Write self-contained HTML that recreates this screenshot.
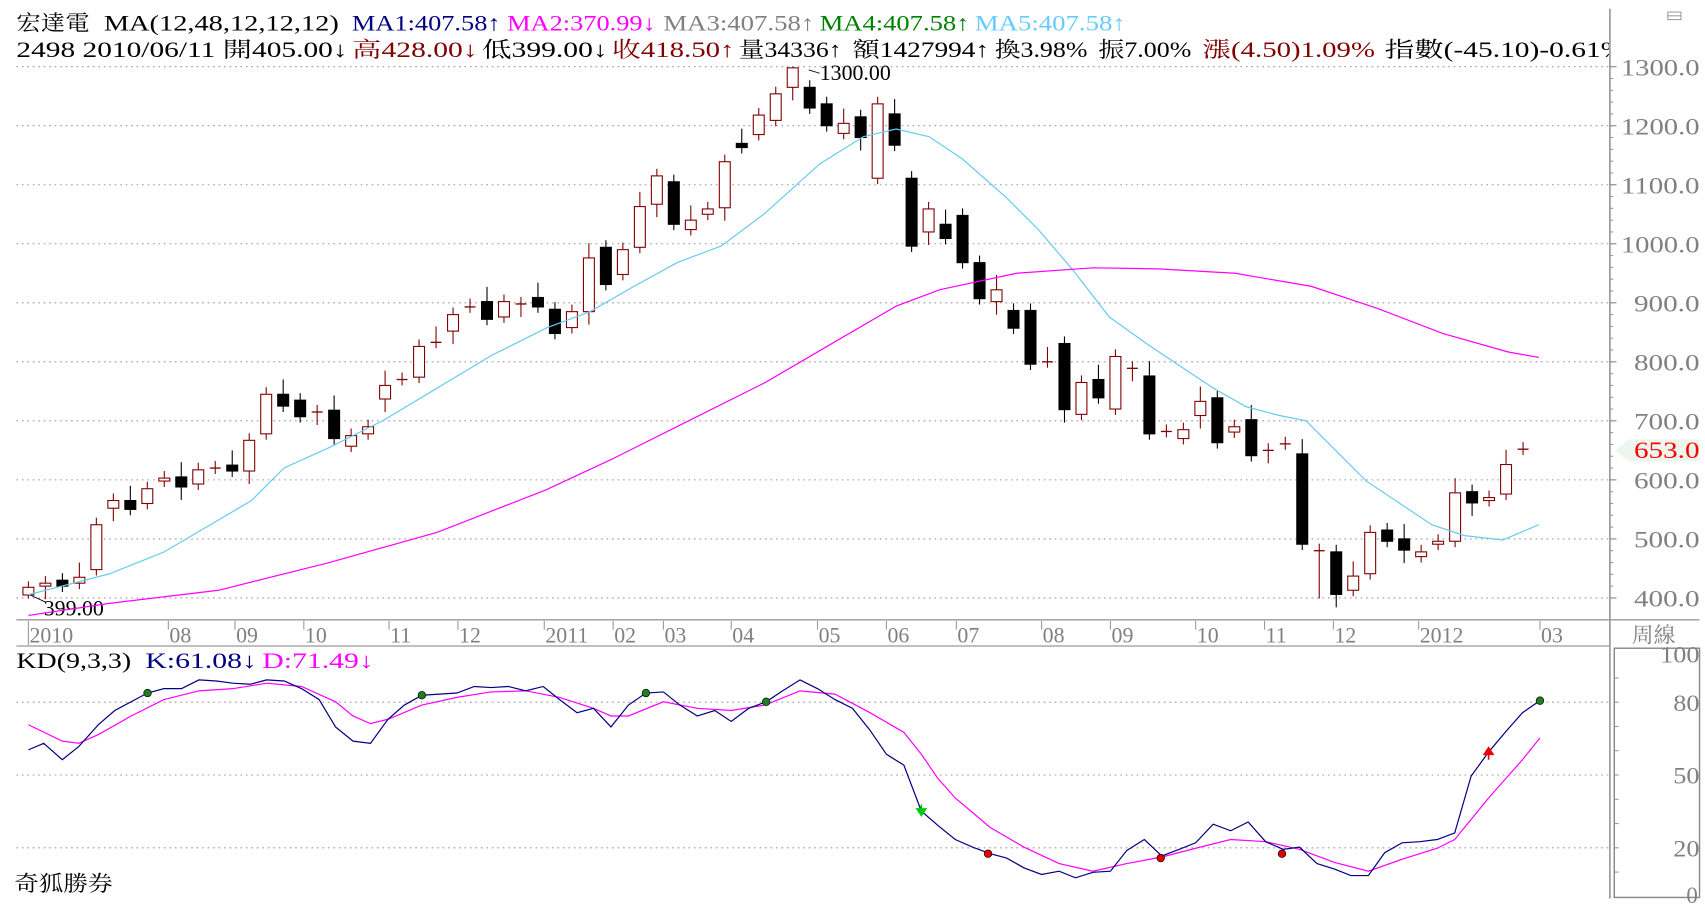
<!DOCTYPE html>
<html><head><meta charset="utf-8"><style>
html,body{margin:0;padding:0;background:#fff;overflow:hidden}
svg{display:block}
text{font-family:"Liberation Serif","Noto Serif CJK SC","Noto Sans CJK TC",serif}
</style></head><body>
<svg id="s" width="1705" height="904" viewBox="0 0 1560 827" preserveAspectRatio="none" xmlns="http://www.w3.org/2000/svg">
<rect width="1560" height="827" fill="#fff"/>
<g id="grid"></g>
<line x1="1473" y1="8" x2="1473" y2="822" stroke="#888" stroke-width="1.3"/>
<line x1="15" y1="567" x2="1555" y2="567" stroke="#999" stroke-width="1.2"/>
<line x1="15" y1="591" x2="1473" y2="591" stroke="#999" stroke-width="1.2"/>
<rect x="1477" y="593" width="78" height="228" fill="none" stroke="#888" stroke-width="1.3"/>
<rect x="1526" y="11" width="12" height="7" fill="none" stroke="#888" stroke-width="0.8"/>
<line x1="1526" y1="14.5" x2="1538" y2="14.5" stroke="#888" stroke-width="0.8"/>
<g font-size="20">
<text x="15" y="28" textLength="67" lengthAdjust="spacingAndGlyphs">宏達電</text>
<text x="95" y="28" textLength="215" lengthAdjust="spacingAndGlyphs">MA(12,48,12,12,12)</text>
<text x="322" y="28" fill="#000080" textLength="136" lengthAdjust="spacingAndGlyphs">MA1:407.58↑</text>
<text x="464" y="28" fill="#ff00ff" textLength="136" lengthAdjust="spacingAndGlyphs">MA2:370.99↓</text>
<text x="607" y="28" fill="#808080" textLength="138" lengthAdjust="spacingAndGlyphs">MA3:407.58↑</text>
<text x="750" y="28" fill="#008000" textLength="137" lengthAdjust="spacingAndGlyphs">MA4:407.58↑</text>
<text x="892" y="28" fill="#66ccff" textLength="138" lengthAdjust="spacingAndGlyphs">MA5:407.58↑</text>
<text x="15" y="52" textLength="303" lengthAdjust="spacingAndGlyphs">2498 2010/06/11 開405.00↓</text>
<text x="322" y="52" fill="#800000" textLength="115" lengthAdjust="spacingAndGlyphs">高428.00↓</text>
<text x="441" y="52" textLength="115" lengthAdjust="spacingAndGlyphs">低399.00↓</text>
<text x="560" y="52" fill="#800000" textLength="112" lengthAdjust="spacingAndGlyphs">收418.50↑</text>
<text x="676" y="52" textLength="94" lengthAdjust="spacingAndGlyphs">量34336↑</text>
<text x="780" y="52" textLength="125" lengthAdjust="spacingAndGlyphs">額1427994↑</text>
<text x="910" y="52" textLength="85" lengthAdjust="spacingAndGlyphs">換3.98%</text>
<text x="1005" y="52" textLength="85" lengthAdjust="spacingAndGlyphs">振7.00%</text>
<text x="1100" y="52" fill="#800000" textLength="158" lengthAdjust="spacingAndGlyphs">漲(4.50)1.09%</text>
<svg x="0" y="0" width="1472" height="60" overflow="hidden"><text x="1267" y="52" textLength="220" lengthAdjust="spacingAndGlyphs">指數(-45.10)-0.61%</text></svg>
<text x="15" y="611" textLength="105" lengthAdjust="spacingAndGlyphs">KD(9,3,3)</text>
<text x="133" y="611" fill="#000080" textLength="102" lengthAdjust="spacingAndGlyphs">K:61.08↓</text>
<text x="240" y="611" fill="#ff00ff" textLength="102" lengthAdjust="spacingAndGlyphs">D:71.49↓</text>
<text x="13" y="815" textLength="90" lengthAdjust="spacingAndGlyphs">奇狐勝券</text>
<text x="1493" y="588" fill="#808080">周線</text>
<text x="40" y="563">399.00</text>
<text x="750" y="73">1300.00</text>
</g>
<line x1="27" y1="544" x2="42" y2="551" stroke="#000" stroke-width="0.8"/>
<line x1="740" y1="64" x2="750" y2="67" stroke="#000" stroke-width="0.8"/>
<polygon points="1478,412 1490,402 1555,402 1555,422 1490,422" fill="#eef5ee"/>
<g id="lab" font-size="21" fill="#808080"></g>
<g id="dates" font-size="20" fill="#808080"></g>
<g id="c"></g>
<polyline fill="none" stroke="#66ccee" stroke-width="1.1" points="26,544 100,525 150,505 230,458 260,428 300,410 350,385 400,355 450,325 500,300 540,285 580,262 620,240 660,225 700,195 750,150 790,125 820,118 850,125 880,145 920,180 950,210 980,245 1015,290 1050,315 1080,335 1110,355 1140,372 1170,380 1195,385 1220,410 1250,440 1280,460 1310,480 1340,490 1375,494 1408,480"/>
<polyline fill="none" stroke="#ff00ff" stroke-width="1.1" points="26,563 100,552 200,540 300,515 400,487 500,448 560,420 620,390 700,350 760,315 820,280 860,265 930,250 1000,245 1060,246 1130,250 1200,262 1260,282 1320,305 1380,322 1408,327"/>
<polyline fill="none" stroke="#ff00ff" stroke-width="1.1" points="26,663 57,678 72,680 90,672 120,655 150,640 182,632 213,630 244,625 276,628 307,642 323,655 339,662 355,658 386,645 418,638 449,633 481,632 512,638 543,648 559,655 575,655 607,642 638,648 669,650 700,645 732,632 764,635 796,652 827,670 843,690 858,712 874,730 906,757 937,775 969,790 1000,797 1031,790 1063,784 1094,776 1126,768 1158,770 1189,777 1221,789 1252,797 1283,786 1315,776 1331,768 1362,730 1393,695 1409,675"/>
<polyline fill="none" stroke="#000080" stroke-width="1.1" points="26,686 40,680 57,695 72,683 90,663 105,650 120,642 135,634 150,630 166,630 182,622 198,623 213,625 229,626 244,622 260,623 276,630 292,640 307,665 323,678 339,680 355,658 370,645 386,636 402,635 418,634 434,628 449,629 465,628 481,632 497,628 512,640 528,652 543,648 559,665 575,645 591,634 607,633 622,645 638,655 654,650 669,660 685,648 701,642 716,632 732,622 748,630 764,640 780,648 796,668 811,690 827,700 843,742 858,755 874,768 890,775 906,781 921,785 937,794 953,800 969,797 984,803 1000,798 1016,797 1031,778 1047,768 1063,783 1079,777 1094,771 1110,754 1126,760 1142,752 1158,770 1174,777 1189,775 1205,790 1221,795 1236,801 1252,801 1267,780 1283,771 1299,770 1315,768 1331,762 1346,710 1362,688 1378,669 1393,652 1409,641"/>
<g stroke="#000" stroke-width="0.6">
<circle cx="135" cy="634" r="3.5" fill="#208020"/><circle cx="386" cy="636" r="3.5" fill="#208020"/><circle cx="591" cy="634" r="3.5" fill="#208020"/><circle cx="701" cy="642" r="3.5" fill="#208020"/><circle cx="1409" cy="641" r="3.5" fill="#208020"/>
<circle cx="904" cy="781" r="3.5" fill="#e00000"/><circle cx="1062" cy="785" r="3.5" fill="#e00000"/><circle cx="1173" cy="781" r="3.5" fill="#e00000"/>
</g>
<path d="M839,740 L847,740 L843,746 Z M843,740 L843,736" stroke="#00cc00" fill="#00cc00" stroke-width="1.5"/>
<path d="M1358,690 L1366,690 L1362,684 Z M1362,690 L1362,695" stroke="#ee0000" fill="#ee0000" stroke-width="1.5"/>
<text x="1495" y="419" font-size="21" fill="#ff0000" textLength="60" lengthAdjust="spacingAndGlyphs">653.0</text>
<script>
var ns="http://www.w3.org/2000/svg";
function el(p,t,a,txt){var e=document.createElementNS(ns,t);for(var k in a)e.setAttribute(k,a[k]);if(txt)e.textContent=txt;p.appendChild(e);return e;}
var g=document.getElementById('grid'),lab=document.getElementById('lab');
function Y(p){return 61+(1300-p)*0.54;}
for(var p=400;p<=1300;p+=100){var y=Y(p);el(g,'line',{x1:15,y1:y,x2:1473,y2:y,stroke:'#999','stroke-dasharray':'1.5,3.5','stroke-width':1});el(g,'line',{x1:1473,y1:y,x2:1479,y2:y,stroke:'#888'});var s=p+'.0';var w=s.length*12;el(lab,'text',{x:1555-w,y:y+8,textLength:w,lengthAdjust:'spacingAndGlyphs'},s);}
for(var p=410;p<1300;p+=20){if(p%100)el(g,'line',{x1:1473,y1:Y(p+10),x2:1476,y2:Y(p+10),stroke:'#999'});}
[80,50,20].forEach(function(v){var y=820-v*2.22;el(g,'line',{x1:15,y1:y,x2:1473,y2:y,stroke:'#999','stroke-dasharray':'1.5,3.5'});el(lab,'text',{x:1531,y:y+8,textLength:24,lengthAdjust:'spacingAndGlyphs'},v);});
el(lab,'text',{x:1519,y:606,textLength:36,lengthAdjust:'spacingAndGlyphs'},'100');el(lab,'text',{x:1543,y:826},'0');
for(var v=10;v<100;v+=10){el(g,'line',{x1:1477,y1:820-v*2.22,x2:1481,y2:820-v*2.22,stroke:'#999'});}
var d=document.getElementById('dates');
[[27,'2010'],[155,'08'],[216,'09'],[279,'10'],[357,'11'],[420,'12'],[499,'2011'],[562,'02'],[608,'03'],[670,'04'],[749,'05'],[812,'06'],[876,'07'],[954,'08'],[1017,'09'],[1095,'10'],[1158,'11'],[1221,'12'],[1299,'2012'],[1410,'03']].forEach(function(a){el(d,'line',{x1:a[0]-1,y1:568,x2:a[0]-1,y2:(a[0]==27?590:576),stroke:'#999'});el(d,'text',{x:a[0],y:588},a[1]);});
var B=[[405,418,428,399],[420,425],[430,420,1],[425,435],[448,524],[552,565],[565,550,1],[560,585],[598,603],[605,588,1],[593,617],[620,620],[625,615,1],[615,667],[678,745],[745,725,1],[735,707,1],[715,715],[718,670,1],[657,675],[678,690],[737,760],[770,770],[774,826],[833,835],[852,880],[893,895],[902,872,1],[876,902],[898,898],[909,893,1],[889,848,1],[858,885],[885,976],[994,931,1],[948,990],[994,1063],[1067,1115],[1105,1033,1],[1024,1040],[1050,1059],[1061,1139],[1170,1163,1],[1185,1218],[1209,1254],[1265,1298,0,1300],[1265,1230,1],[1237,1200,1],[1187,1204],[1215,1180,1],[1111,1237],[1220,1167,1],[1111,996,1],[1020,1059],[1033,1009,1],[1048,968,1],[968,907,1],[902,922],[887,857,1],[887,796,1],[800,800],[831,719,1],[711,765],[770,739,1],[720,809],[789,789],[776,678,1],[682,682],[670,685],[709,733],[739,663,1],[681,690],[702,641,1],[650,650],[661,661],[644,491,1],[480,480],[478,406,1],[413,437],[441,511],[515,496,1],[500,481,1],[470,478],[491,496],[496,578],[580,561,1],[565,570],[576,626],[652,652]];
var c=document.getElementById('c');
B.forEach(function(b,i){var x=26+i*15.54,o=b[0],cl=b[1],blk=b[2]==1;var hi=Math.max(o,cl),lo=Math.min(o,cl);var H=b[3]||hi+(i%3==0?25:12),L=lo-(i%4==1?22:10);if(i==0){H=428;L=399;}if(i==76)L=399;
var col=blk?'#000':'#800000';
el(c,'line',{x1:x,y1:Y(H),x2:x,y2:Y(L),stroke:col,'stroke-width':1});
if(Math.abs(o-cl)<3){el(c,'line',{x1:x-5,y1:Y(o),x2:x+5,y2:Y(o),stroke:col,'stroke-width':1.2});}
else el(c,'rect',{x:x-5,y:Y(hi),width:10,height:Y(lo)-Y(hi),fill:blk?'#000':'#fff',stroke:col,'stroke-width':1});
});
</script>
</svg>
</body></html>
